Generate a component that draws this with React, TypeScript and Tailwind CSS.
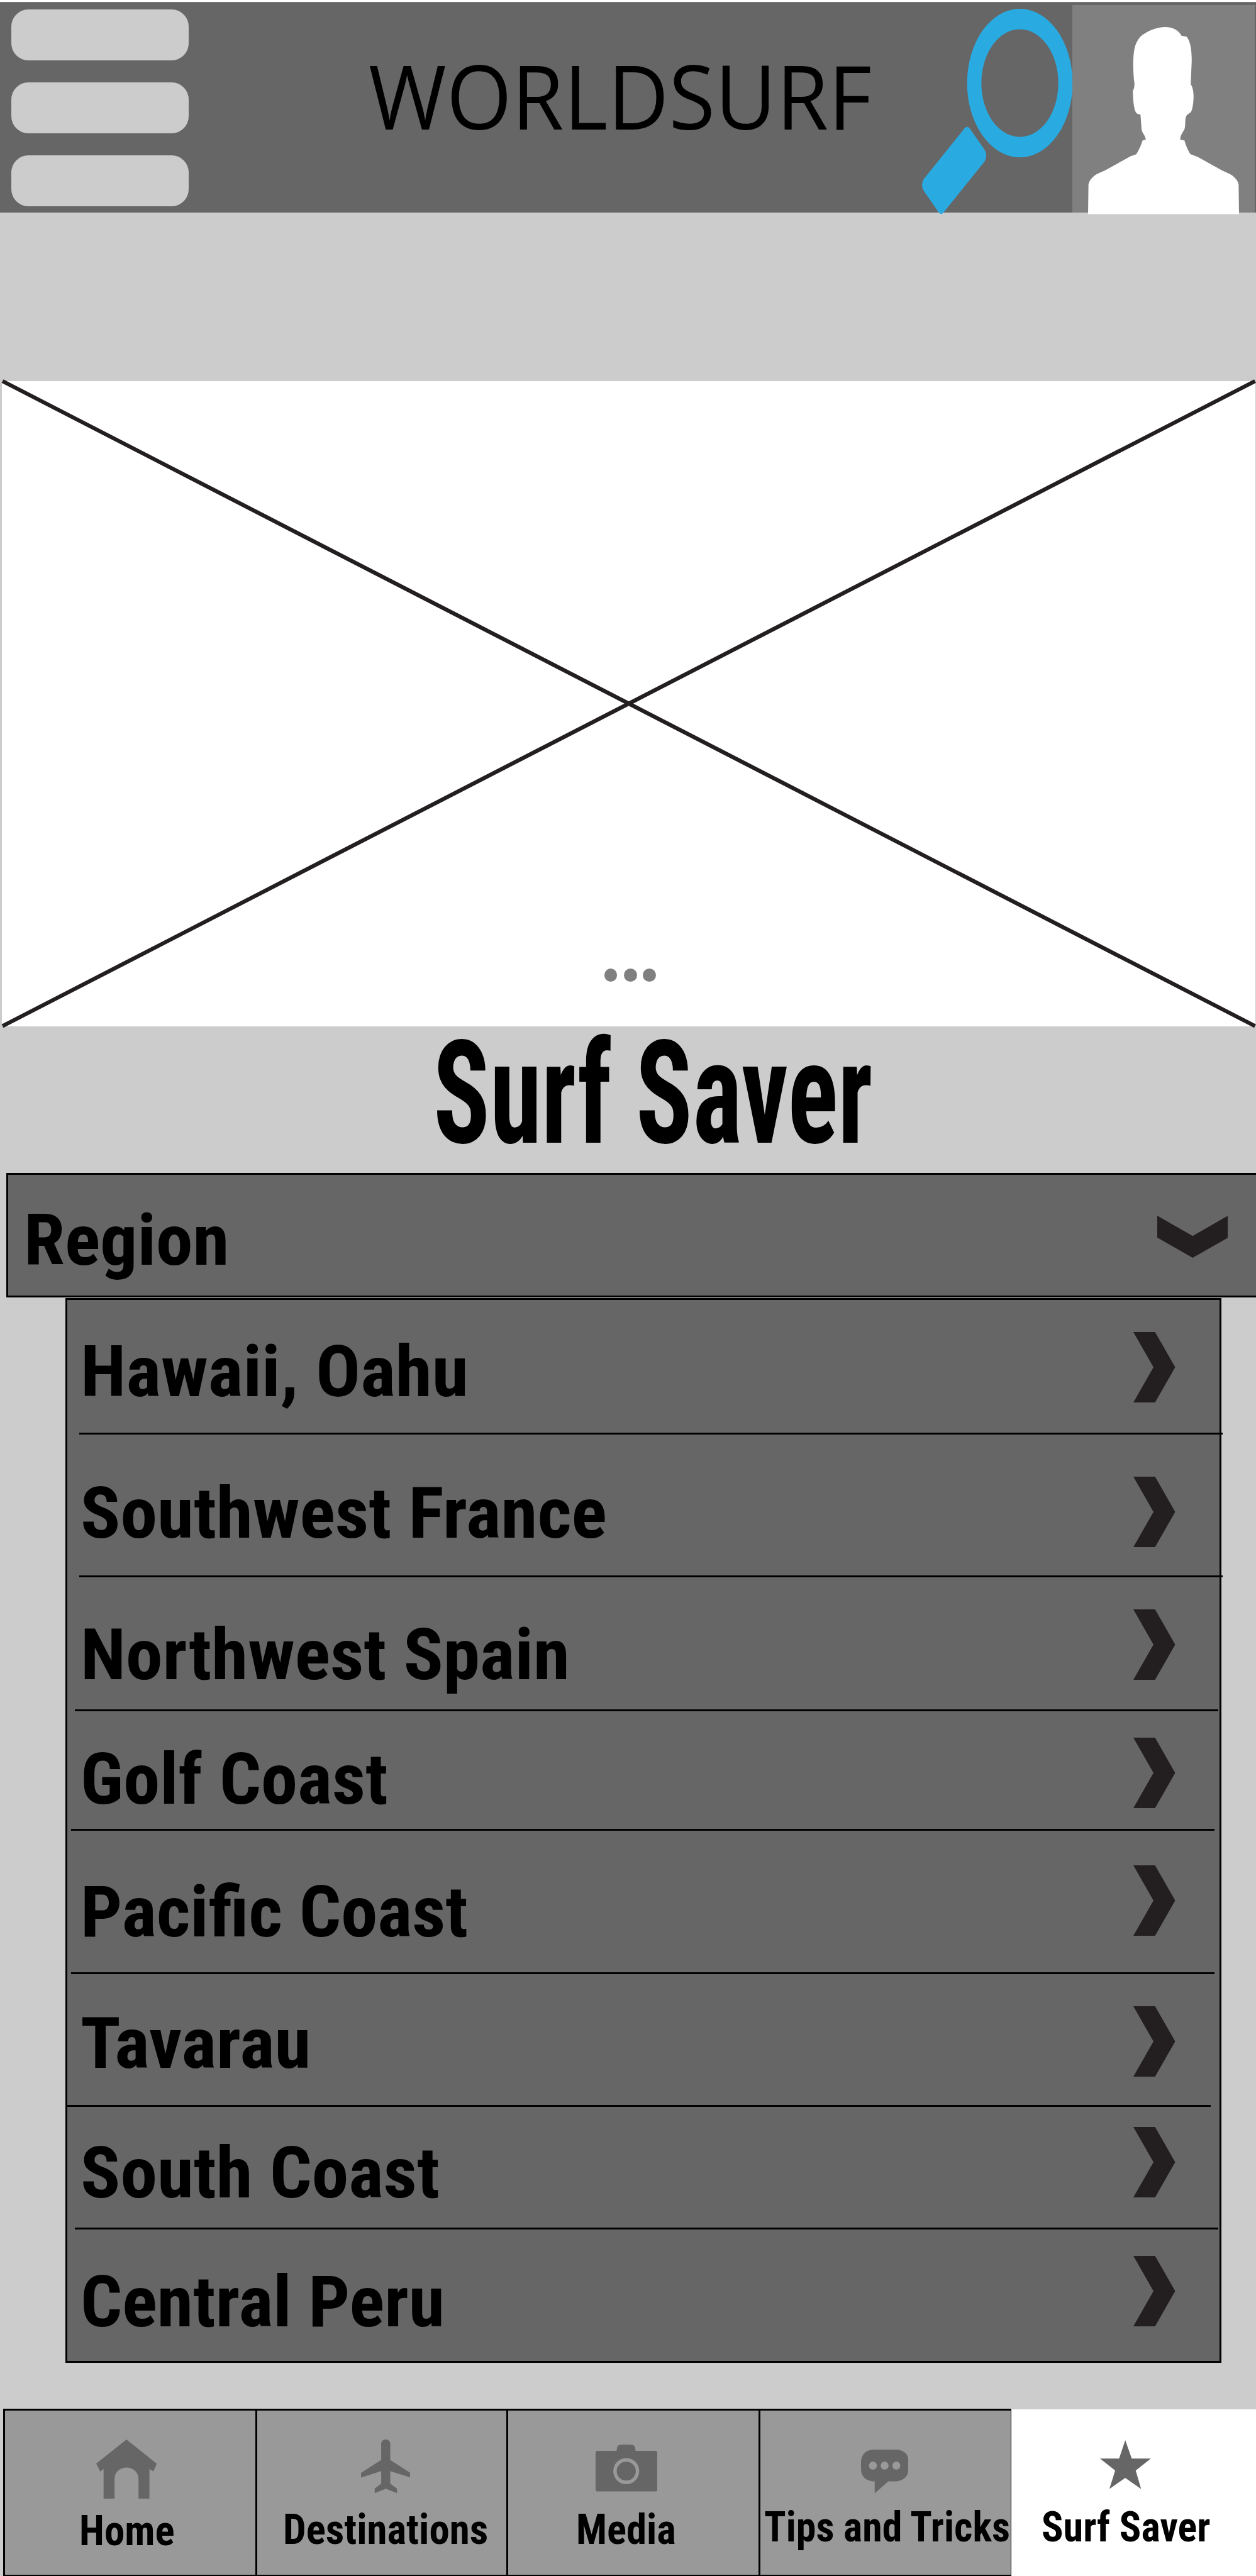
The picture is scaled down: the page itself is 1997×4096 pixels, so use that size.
type Region = {
  name: string;
  row: string;
  label: string;
  arrow: string;
  line: string;
};

const regions: Region[] = [
  { name: "Hawaii, Oahu", row: "h-[214px]", label: "mt-[58.5px] scale-x-[1.049]", arrow: "mt-[51px]", line: "ml-[19px] -mr-[5px]" },
  { name: "Southwest France", row: "h-[227px]", label: "mt-[69.9px] scale-x-[1.046]", arrow: "mt-[67px]", line: "ml-[19px] -mr-[5px]" },
  { name: "Northwest Spain", row: "h-[213px]", label: "mt-[68.2px] scale-x-[1.045]", arrow: "mt-[50.5px]", line: "ml-[12px] mr-[2px]" },
  { name: "Golf Coast", row: "h-[190px]", label: "mt-[53.1px] scale-x-[1.036]", arrow: "mt-[42px]", line: "ml-[6px] mr-[8px]" },
  { name: "Pacific Coast", row: "h-[228px]", label: "mt-[73.6px] scale-x-[1.037]", arrow: "mt-[55px]", line: "ml-[6px] mr-[8px]" },
  { name: "Tavarau", row: "h-[211px]", label: "mt-[55px] scale-x-[1.045]", arrow: "mt-[51px]", line: "mr-[14px]" },
  { name: "South Coast", row: "h-[195px]", label: "mt-[49.6px] scale-x-[1.045]", arrow: "mt-[32px]", line: "ml-[12px] mr-[2px]" },
  { name: "Central Peru", row: "h-[209px]", label: "mt-[60px] scale-x-[1.033]", arrow: "mt-[42px]", line: "hidden" },
];

function SearchIcon() {
  return (
    <svg
      className="mt-[10.7px] -mr-[0.5px] ml-[20.3px] h-[326.4px] w-[239.4px] shrink-0 fill-[#29abe2]"
      viewBox="783 44 354 1046"
      preserveAspectRatio="none"
    >
      <path
        fillRule="evenodd"
        d="M1013 44A124 378.500 0 0 1 1013 801A124 378.500 0 0 1 1013 44ZM1013 148A90.500 274.500 0 0 0 1013 697A90.500 274.500 0 0 0 1013 148Z"
      />
      <path d="M883 653Q889 638 895 653L930 762Q938 793 930 822L834 1081Q828 1098 822 1081L787 972Q779 942 787 912Z" />
    </svg>
  );
}

function Avatar() {
  return (
    <div className="mt-[4.5px] h-[330.5px] w-[290px] shrink-0 bg-[#808080] pt-[35.5px] pl-[25px]">
      <svg className="h-[297.6px] w-[240px] fill-white" viewBox="99 138 769 954" preserveAspectRatio="none">
        <path d="M99 1092L101 940C106 918 122 900 144 887L187 868L315 797L343 787C352 781 370 737 377 716L393 712C392 694 375 677 372 664L366 584L351 580C331 573 328 500 327 463C332 453 336 446 335 425C328 370 326 300 335 250C343 210 365 182 384 173C450 130 540 120 575 182L602 188C622 215 627 260 627 310L622 430C638 455 638 490 635 520C632 550 626 570 621 573C595 588 596 595 594 625C593 665 588 660 580 677C572 688 568 700 569 713L590 716C597 742 613 780 623 787L656 799L780 868L823 888C845 900 862 920 866 940L868 1092Z" />
      </svg>
    </div>
  );
}

function Header() {
  return (
    <header className="flex h-[335px] items-start bg-[#666666] shadow-[inset_0_1px_0_#808080]">
      <div className="mt-[12.3px] ml-[18.3px] flex w-[282px] shrink-0 flex-col gap-[35px]">
        <div className="h-[81px] rounded-[27px] bg-[#cccccc]" />
        <div className="h-[81px] rounded-[27px] bg-[#cccccc]" />
        <div className="h-[81px] rounded-[27px] bg-[#cccccc]" />
      </div>
      <h1 className="mt-[78px] ml-[285.3px] w-[860px] shrink-0 origin-left scale-x-[0.9456] font-['Open_Sans',sans-serif] text-[141.6px] leading-none whitespace-nowrap">
        WORLDSURF
      </h1>
      <SearchIcon />
      <Avatar />
    </header>
  );
}

function Hero() {
  return (
    <section className="relative mt-[268px] mr-px ml-[2.5px] h-[1025.5px] bg-white">
      <svg
        className="absolute inset-0 h-full w-full overflow-visible stroke-[#231f20]"
        viewBox="0 0 1993 1025"
        preserveAspectRatio="none"
      >
        <path d="M1 0L1992 1025M1992 0L1 1025" strokeWidth="6.4" fill="none" />
      </svg>
      <div className="absolute top-[934.3px] left-[958px] flex">
        <span className="size-[20.5px] rounded-full bg-[#808080]" />
        <span className="ml-[11.1px] size-[20.5px] rounded-full bg-[#808080]" />
        <span className="ml-[9.6px] size-[20.5px] rounded-full bg-[#808080]" />
      </div>
    </section>
  );
}

function RegionHeader() {
  return (
    <div className="ml-[9.5px] flex h-[198px] items-start justify-between border-y-3 border-l-3 border-black bg-[#666666] pr-[45px] pl-[25px]">
      <h3 className="mt-[48.6px] origin-left scale-x-[1.045] text-[112.5px] leading-none font-bold">Region</h3>
      <svg className="mt-[65px] h-[67px] w-[112.5px] fill-[#231f20]" viewBox="0 0 176 125" preserveAspectRatio="none">
        <path d="M0 0L88 60L176 0V65L88 125L0 65Z" />
      </svg>
    </div>
  );
}

function RegionList() {
  return (
    <ul className="mt-px mr-[55.5px] ml-[104px] border-3 border-black bg-[#666666]">
      {regions.map((r) => (
        <li key={r.name} className={`flex flex-col ${r.row}`}>
          <div className="flex flex-1 items-start justify-between pr-[70px] pl-[20.5px]">
            <span className={`origin-left text-[112.5px] leading-none font-bold whitespace-nowrap ${r.label}`}>
              {r.name}
            </span>
            <svg
              className={`h-[112px] w-[66.5px] fill-[#231f20] ${r.arrow}`}
              viewBox="0 0 104 208"
              preserveAspectRatio="none"
            >
              <path d="M0 0H54L104 104L54 208H0L50 104Z" />
            </svg>
          </div>
          <div className={`relative h-[3px] shrink-0 bg-black ${r.line}`} />
        </li>
      ))}
    </ul>
  );
}

const navText = "mt-auto origin-left text-[66px] leading-none font-bold whitespace-nowrap";

function BottomNav() {
  return (
    <nav className="mt-auto flex h-[266px] shrink-0 pl-[4.5px]">
      <a className="flex w-[401px] shrink-0 flex-col border-t-3 border-b-2 border-l-3 border-black bg-[#999999]">
        <svg
          className="mt-[46px] ml-[145.6px] h-[93.9px] w-[96.3px] fill-[#666666]"
          viewBox="38 42 288 301"
          preserveAspectRatio="none"
        >
          <path d="M182 42L326 165L310 205L291 192V343H239V245C239 165 125 165 125 245V343H73V192L57 205L38 165Z" />
        </svg>
        <span className={`${navText} mb-[36.5px] ml-[118px] scale-x-[0.985]`}>Home</span>
      </a>
      <a className="flex w-[399.5px] shrink-0 flex-col border-t-3 border-b-2 border-l-3 border-black bg-[#999999]">
        <svg
          className="mt-[46px] ml-[165px] h-[85.5px] w-[78.6px] fill-[#666666]"
          viewBox="1296 42 235 274"
          preserveAspectRatio="none"
        >
          <path d="M1392 64C1392 35 1435 35 1435 64V146L1531 212V236L1435 203V266L1467 292V315L1414 293L1361 315V292L1392 266V203L1296 236V212L1392 146Z" />
        </svg>
        <span className={`${navText} mb-[38.5px] ml-[41.5px] scale-x-[0.984]`}>Destinations</span>
      </a>
      <a className="flex w-[400.5px] shrink-0 flex-col border-t-3 border-b-2 border-l-3 border-black bg-[#999999]">
        <svg
          className="mt-[54.4px] ml-[139px] h-[74.6px] w-[98px] fill-[#666666]"
          viewBox="19 69 171 239"
          preserveAspectRatio="none"
        >
          <path
            fillRule="evenodd"
            d="M24 101H77L79 83Q80 73 87 71Q104 67 121 71Q127 73 128 83L130 101H185Q190 102 190 111V299Q190 308 185 308H24Q19 308 19 299V111Q19 102 24 101ZM104 138A36 66.500 0 0 0 104 271A36 66.500 0 0 0 104 138Z"
          />
          <ellipse cx="104" cy="204.500" rx="26.500" ry="48" />
        </svg>
        <span className={`${navText} mb-[38.5px] ml-[108px] scale-x-[0.98]`}>Media</span>
      </a>
      <a className="flex w-[402.5px] shrink-0 flex-col border-t-3 border-r-[1.5px] border-b-2 border-l-3 border-black bg-[#999999]">
        <svg
          className="mt-[62px] ml-[160px] h-[69.6px] w-[75.6px] fill-[#666666]"
          viewBox="755 93 132 223"
          preserveAspectRatio="none"
        >
          <path
            fillRule="evenodd"
            d="M787 93H855Q887 99 887 155V194Q885 246 855 255H831L793 316V255H787Q756 246 755 194V155Q757 99 787 93ZM788 154A11 20.500 0 0 0 788 195A11 20.500 0 0 0 788 154ZM820.500 154A11 20.500 0 0 0 820.500 195A11 20.500 0 0 0 820.500 154ZM853 154A11 20.500 0 0 0 853 195A11 20.500 0 0 0 853 154Z"
          />
        </svg>
        <span className={`${navText} mb-[42px] ml-[6px] scale-x-[0.968]`}>Tips and Tricks</span>
      </a>
      <a className="mt-px flex flex-1 flex-col bg-white">
        <svg
          className="mt-[48.7px] ml-[141.2px] h-[77.7px] w-[80.8px] fill-[#666666]"
          viewBox="1419 45 141 249"
          preserveAspectRatio="none"
        >
          <path d="M1489 45L1507 139H1560L1518 200L1533 294L1489 237L1445 294L1461 200L1419 139H1472Z" />
        </svg>
        <span className={`${navText} mb-[44px] ml-[48px] scale-x-[0.972]`}>Surf Saver</span>
      </a>
    </nav>
  );
}

export default function App() {
  return (
    <div className="flex h-[4096px] w-[1997px] flex-col overflow-hidden border-t-3 border-white bg-[#cccccc] font-['Roboto_Condensed',Roboto,sans-serif] text-black">
      <Header />
      <Hero />
      <div className="h-[233.500px] shrink-0 pl-[688.7px]">
        <h2 className="-mt-[5.4px] origin-left scale-x-[0.7335] text-[227.5px] leading-none font-bold whitespace-nowrap">
          Surf Saver
        </h2>
      </div>
      <RegionHeader />
      <RegionList />
      <BottomNav />
    </div>
  );
}
